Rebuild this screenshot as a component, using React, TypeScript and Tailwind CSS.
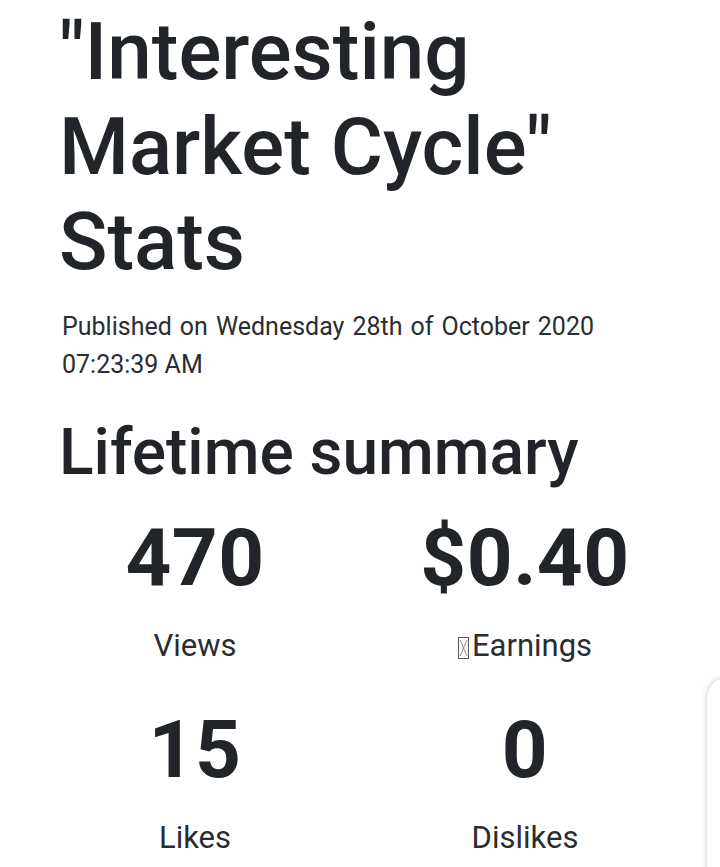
import React from 'react'

const Tofu = () => (
    <svg width="11" height="22" viewBox="0 0 11 22" className="inline-block align-[-3px] mr-[3px]">
        <rect x="0.5" y="0.5" width="10" height="21" fill="none" stroke="#555" strokeWidth="1" />
        <path d="M2 3 L9 19 M9 3 L2 19" stroke="#777" strokeWidth="0.8" fill="none" />
    </svg>
)

const Stat = ({ value, label, tofu }: { value: string; label: string; tofu?: boolean }) => (
    <div className="flex flex-col items-center">
        <div className="text-[80px] leading-[96px] font-bold tracking-[0.5px]">{value}</div>
        <div className="mt-[20px] text-[31px] leading-[40px] text-[#2a2d31]">
            {tofu && <Tofu />}
            {label}
        </div>
    </div>
)

export default function App() {
    return (
        <div
            className="relative w-[720px] h-[867px] overflow-hidden bg-white text-[#212529]"
            style={{ fontFamily: 'Roboto, "Noto Sans", sans-serif' }}
        >
            <div className="pl-[62px] pt-[5px]">
                <h1 className="-ml-[3px] w-[600px] text-[80px] leading-[95px] font-medium">
                    "Interesting Market Cycle" Stats
                </h1>
                <p className="w-[532px] mt-[18px] text-[25px] leading-[38px] text-justify text-[#2a2d31]">
                    Published on Wednesday 28th of October 2020 07:23:39 AM
                </p>
                <h2 className="-ml-[3px] mt-[31px] text-[64px] leading-[76px] font-medium">Lifetime summary</h2>
            </div>

            <div className="grid grid-cols-[330px_330px] pl-[30px] mt-[19px]">
                <Stat value="470" label="Views" />
                <Stat value="$0.40" label="Earnings" tofu />
            </div>
            <div className="grid grid-cols-[330px_330px] pl-[30px] mt-[36px]">
                <Stat value="15" label="Likes" />
                <Stat value="0" label="Dislikes" />
            </div>

            <div className="absolute left-[706px] top-[676px] w-[60px] h-[260px] rounded-tl-[22px] bg-white border-l border-t border-[#e4e4e4] shadow-[-2px_0_4px_rgba(0,0,0,0.08)]" />
        </div>
    )
}
